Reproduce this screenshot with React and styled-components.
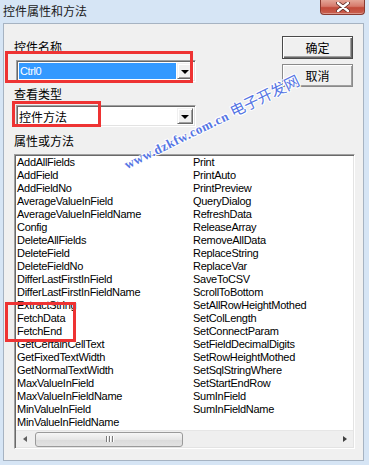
import React from "react";
import styled, { createGlobalStyle } from "styled-components";

const Global = createGlobalStyle`
  html, body { margin: 0; padding: 0; overflow: hidden; background: #d3e3f4; }
  * { box-sizing: border-box; }
`;

const CJK = `"Noto Sans CJK SC", "Noto Sans", sans-serif`;
const LATIN = `"Liberation Sans", Arial, sans-serif`;

const Frame = styled.div`
  position: relative;
  width: 369px;
  height: 465px;
  background: #d6e5f5;
  display: flex;
  flex-direction: column;
  padding: 0 5px 4px 3px;
  font-family: ${CJK};
  color: #000;
`;

const TitleBar = styled.div`
  height: 23px;
  display: flex;
  align-items: flex-start;
`;

const Title = styled.div`
  font-size: 12px;
  line-height: 14px;
  padding-top: 4px;
  color: #1a1a1a;
`;

const CloseButton = styled.div`
  margin-left: auto;
  margin-right: -1px;
  width: 45px;
  height: 15px;
  border: 1px solid #8a3a30;
  border-top: none;
  border-radius: 0 0 4px 4px;
  background: linear-gradient(#e4a597 0%, #d67a6c 45%, #c24a3a 55%, #c9604f 100%);
  box-shadow: inset 0 -1px 0 rgba(255, 255, 255, 0.35);
  display: flex;
  align-items: center;
  justify-content: center;
`;

const Client = styled.div`
  flex: 1;
  background: #f0f0f0;
  border: 1px solid #a6b3c2;
  padding: 12px 8px 0 10px;
  display: flex;
  flex-direction: column;
`;

const Top = styled.div`
  display: flex;
  justify-content: space-between;
`;

const LeftCol = styled.div`
  display: flex;
  flex-direction: column;
  padding-top: 4px;
`;

const Label = styled.div`
  font-size: 12px;
  line-height: 14px;
  height: 14px;
  margin-top: ${(p) => p.$mt || 0}px;
`;

const Combo = styled.div`
  margin-top: ${(p) => p.$mt || 0}px;
  margin-left: 2px;
  width: 180px;
  height: 22px;
  background: #fff;
  border-style: solid;
  border-width: 1px;
  border-color: #a0a0a0 #fff #fff #a0a0a0;
  box-shadow: inset 1px 1px 0 #696969, inset -1px -1px 0 #e3e3e3;
  padding: 2px;
  display: flex;
  align-items: stretch;
`;

const ComboValue = styled.div`
  flex: 1;
  margin-right: 1px;
  display: flex;
  align-items: center;
  padding-left: ${(p) => (p.$selected ? 1 : 0)}px;
  background: ${(p) => (p.$selected ? "#3399ff" : "transparent")};
  color: ${(p) => (p.$selected ? "#fff" : "#000")};
  font-family: ${(p) => (p.$latin ? LATIN : CJK)};
  font-size: ${(p) => (p.$latin ? 11 : 12)}px;
  letter-spacing: ${(p) => (p.$latin ? "-0.4px" : "0")};
`;

const DropButton = styled.div`
  width: 16px;
  background: #f0f0f0;
  border-style: solid;
  border-width: 1px;
  border-color: #f0f0f0 #696969 #696969 #f0f0f0;
  box-shadow: inset 1px 1px 0 #fff, inset -1px -1px 0 #a0a0a0;
  display: flex;
  align-items: center;
  justify-content: center;
`;

const Triangle = styled.div`
  width: 0;
  height: 0;
  border-left: 4px solid transparent;
  border-right: 4px solid transparent;
  border-top: 4px solid #000;
  margin-top: 1px;
`;

const ButtonCol = styled.div`
  display: flex;
  flex-direction: column;
  gap: 5px;
  margin-right: 2px;
`;

const Button = styled.div`
  width: 71px;
  height: 23px;
  display: flex;
  align-items: center;
  justify-content: center;
  font-size: 12px;
  background: #f0f0f0;
  border: 1px solid ${(p) => (p.$default ? "#4a4a4a" : "#8a8a8a")};
  box-shadow: ${(p) =>
    p.$default
      ? "inset 1px 1px 0 #fff, inset -1px -1px 0 #696969, inset -2px -2px 0 #a0a0a0"
      : "inset 1px 1px 0 #fff, inset -1px -1px 0 #a0a0a0"};
`;

const ListBox = styled.div`
  margin-top: 6px;
  height: 295px;
  background: #fff;
  border-style: solid;
  border-width: 1px;
  border-color: #a0a0a0 #fff #fff #a0a0a0;
  box-shadow: inset 1px 1px 0 #696969, inset -1px -1px 0 #e3e3e3;
  padding: 1px;
  display: flex;
  flex-direction: column;
`;

const Columns = styled.div`
  flex: 1;
  display: grid;
  grid-auto-flow: column;
  grid-template-rows: repeat(21, 13px);
  grid-auto-columns: 176px;
  align-content: start;
  font-family: ${LATIN};
  font-size: 11px;
  letter-spacing: -0.28px;
  padding-left: 1px;
  overflow: hidden;
`;

const Item = styled.div`
  line-height: 13px;
  white-space: nowrap;
`;

const HScroll = styled.div`
  height: 17px;
  background: #efefef;
  border-top: 1px solid #e6e6e6;
  display: flex;
  align-items: stretch;
`;

const Arrow = styled.div`
  width: 17px;
  display: flex;
  align-items: center;
  justify-content: center;
`;

const Tri = styled.div`
  width: 0;
  height: 0;
  border-top: 3.5px solid transparent;
  border-bottom: 3.5px solid transparent;
  ${(p) => (p.$dir === "left" ? "border-right: 4px solid #606060;" : "border-left: 4px solid #404040;")}
`;

const Track = styled.div`
  flex: 1;
  display: flex;
  align-items: center;
  padding-left: 2px;
`;

const Thumb = styled.div`
  width: 148px;
  height: 15px;
  border: 1px solid #9a9a9a;
  border-radius: 3px;
  background: linear-gradient(#f6f6f6, #e6e6e6 50%, #dadada 51%, #e3e3e3);
  display: flex;
  align-items: center;
  justify-content: center;
  gap: 2px;
`;

const Grip = styled.div`
  width: 1px;
  height: 6px;
  background: #7a7a7a;
  box-shadow: 1px 0 0 #fff;
`;

const RedBox = styled.div`
  position: absolute;
  border: 3px solid #ee3333;
  pointer-events: none;
`;

const Watermark = styled.div`
  position: absolute;
  left: 211px;
  top: 121px;
  transform: translate(-50%, -50%) rotate(-26deg);
  white-space: nowrap;
  font-family: "Liberation Serif", "Noto Sans CJK SC", serif;
  font-size: 13px;
  font-weight: bold;
  letter-spacing: 0.5px;
  color: #5575e4;
  text-shadow: 1px 1px 0 #fff, -1px -1px 0 #fff, 1px -1px 0 #fff, -1px 1px 0 #fff;
  pointer-events: none;
`;

const Cn = styled.span`
  font-family: ${CJK};
  font-size: 15px;
  font-weight: normal;
  letter-spacing: 0;
`;

const col1 = [
  "AddAllFields", "AddField", "AddFieldNo", "AverageValueInField", "AverageValueInFieldName",
  "Config", "DeleteAllFields", "DeleteField", "DeleteFieldNo", "DifferLastFirstInField",
  "DifferLastFirstInFieldName", "ExtractString", "FetchData", "FetchEnd", "GetCertainCellText",
  "GetFixedTextWidth", "GetNormalTextWidth", "MaxValueInField", "MaxValueInFieldName",
  "MinValueInField", "MinValueInFieldName",
];
const col2 = [
  "Print", "PrintAuto", "PrintPreview", "QueryDialog", "RefreshData", "ReleaseArray",
  "RemoveAllData", "ReplaceString", "ReplaceVar", "SaveToCSV", "ScrollToBottom",
  "SetAllRowHeightMothed", "SetColLength", "SetConnectParam", "SetFieldDecimalDigits",
  "SetRowHeightMothed", "SetSqlStringWhere", "SetStartEndRow", "SumInField", "SumInFieldName",
];

export default function App() {
  return (
    <Frame>
      <Global />
      <TitleBar>
        <Title>控件属性和方法</Title>
        <CloseButton>
          <svg width="14" height="10" viewBox="0 0 14 10">
            <path d="M2 1 L12 9 M12 1 L2 9" stroke="#5a2a24" strokeWidth="4" strokeLinecap="round" />
            <path d="M2 1 L12 9 M12 1 L2 9" stroke="#fff" strokeWidth="2.4" strokeLinecap="round" />
          </svg>
        </CloseButton>
      </TitleBar>
      <Client>
        <Top>
          <LeftCol>
            <Label>控件名称</Label>
            <Combo $mt={6}>
              <ComboValue $selected $latin>Ctrl0</ComboValue>
              <DropButton><Triangle /></DropButton>
            </Combo>
            <Label $mt={5}>查看类型</Label>
            <Combo $mt={4}>
              <ComboValue>控件方法</ComboValue>
              <DropButton><Triangle /></DropButton>
            </Combo>
            <Label $mt={7}>属性或方法</Label>
          </LeftCol>
          <ButtonCol>
            <Button $default>确定</Button>
            <Button>取消</Button>
          </ButtonCol>
        </Top>
        <ListBox>
          <Columns>
            {col1.map((t) => <Item key={t}>{t}</Item>)}
            {col2.map((t) => <Item key={t}>{t}</Item>)}
          </Columns>
          <HScroll>
            <Arrow><Tri $dir="left" /></Arrow>
            <Track>
              <Thumb><Grip /><Grip /><Grip /></Thumb>
            </Track>
            <Arrow><Tri $dir="right" /></Arrow>
          </HScroll>
        </ListBox>
      </Client>
      <RedBox style={{ left: 5, top: 51, width: 188, height: 32 }} />
      <RedBox style={{ left: 12, top: 101, width: 89, height: 26 }} />
      <RedBox style={{ left: 5, top: 302, width: 71, height: 40 }} />
      <Watermark>www.dzkfw.com.cn <Cn>电子开发网</Cn></Watermark>
    </Frame>
  );
}
